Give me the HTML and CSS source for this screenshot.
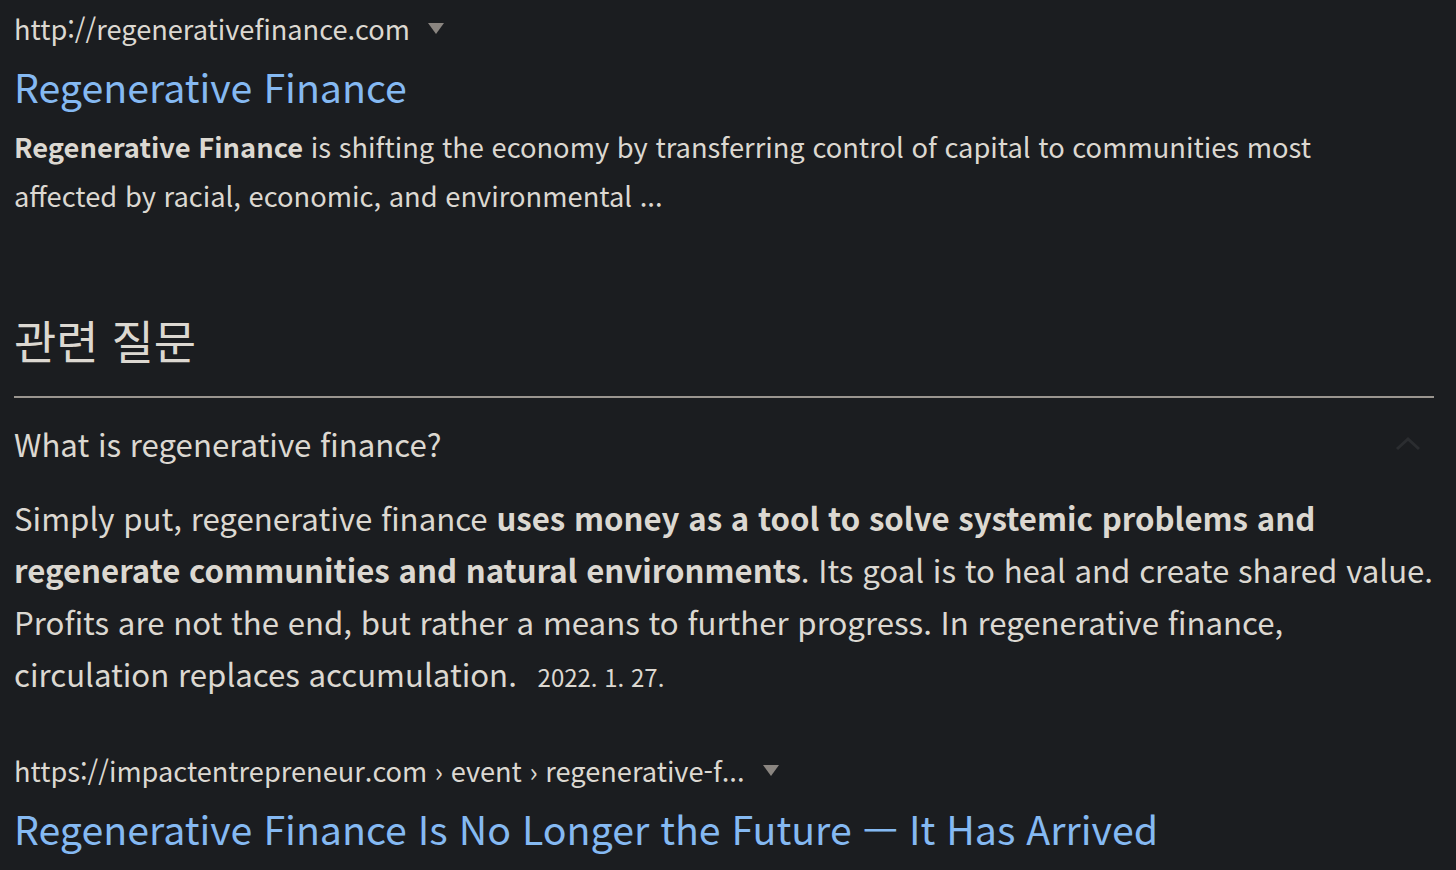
FILE: index.html
```html
<!DOCTYPE html>
<html lang="ko">
<head>
<meta charset="utf-8">
<title>Regenerative Finance</title>
<link rel="stylesheet" href="styles.css">
</head>
<body>
<main class="page">
  <section class="result">
    <div class="url-row">
      <span class="url">http://regenerativefinance.com</span>
      <span class="caret"></span>
    </div>
    <a class="title" href="#">Regenerative Finance</a>
    <p class="snippet"><b>Regenerative Finance</b> is shifting the economy by transferring control of capital to communities most affected by racial, economic, and environmental ...</p>
  </section>

  <section class="related">
    <h2 class="related-head">관련 질문</h2>
    <div class="qa">
      <div class="question">
        <span>What is regenerative finance?</span>
        <svg class="chev" width="28" height="18" viewBox="0 0 28 18"><path d="M3 15 L14 5 L25 15" fill="none" stroke="#2b2d30" stroke-width="3"/></svg>
      </div>
      <p class="answer">Simply put, regenerative finance <b>uses money as a tool to solve systemic problems and regenerate communities and natural environments</b>. Its goal is to heal and create shared value. Profits are not the end, but rather a means to further progress. In regenerative finance, circulation replaces accumulation. <span class="date">2022. 1. 27.</span></p>
    </div>
  </section>

  <section class="result result2">
    <div class="url-row">
      <span class="url">https://impactentrepreneur.com › event › regenerative-f...</span>
      <span class="caret"></span>
    </div>
    <a class="title" href="#">Regenerative Finance Is No Longer the Future — It Has Arrived</a>
  </section>
</main>
</body>
</html>
```

FILE: styles.css
```css
html, body {
  margin: 0;
  padding: 0;
  background: #1b1d20;
}
body {
  font-family: "Noto Sans CJK KR", "Noto Sans", sans-serif;
  color: #dcd8d1;
  overflow: hidden;
}
.page {
  padding: 0 20px 0 14px;
}
.url-row {
  display: flex;
  align-items: center;
  gap: 18px;
  height: 56px;
  font-size: 27.2px;
  color: #dcd8d1;
}
.caret {
  width: 0;
  height: 0;
  border-left: 8px solid transparent;
  border-right: 8px solid transparent;
  border-top: 11px solid #8a8580;
}
.title {
  display: block;
  margin-top: 2px;
  color: #85b9f2;
  text-decoration: none;
  font-size: 39.3px;
  line-height: 56px;
}
.snippet {
  margin: 8px 0 0;
  max-width: 1320px;
  font-size: 27.3px;
  line-height: 49px;
}
.snippet b { font-weight: 700; }
.related {
  margin-top: 84px;
}
.related-head {
  margin: 0 2px 0 0;
  font-size: 46px;
  font-weight: 400;
  line-height: 70px;
  padding-bottom: 22px;
  border-bottom: 2px solid #9a958f;
}
.question {
  display: flex;
  justify-content: space-between;
  align-items: center;
  height: 90px;
  padding-bottom: 4px;
  padding-right: 2px;
  font-size: 31.2px;
}
.chev { margin-right: 12px; }
.answer {
  margin: 0;
  font-size: 31.2px;
  line-height: 52px;
}
.answer b { font-weight: 700; }
.date {
  font-size: 24px;
  margin-left: 12px;
}
.result2 {
  margin-top: 39px;
}
```
